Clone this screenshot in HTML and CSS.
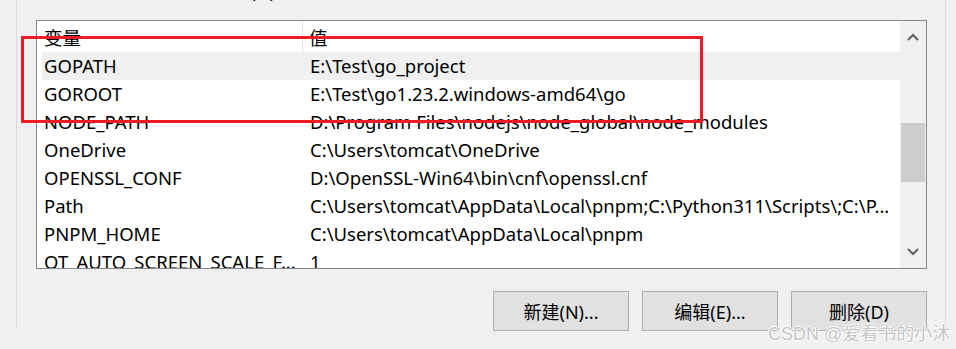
FILE: index.html
```html
<!DOCTYPE html>
<html lang="zh-CN">
<head>
    <meta charset="UTF-8">
    <title>环境变量</title>
    <link rel="stylesheet" href="styles.css">
</head>
<body>
    <div class="group">
        <div class="caption">tomcat 的用户变量(U)</div>

        <div class="list">
            <div class="list-body">
                <div class="row head">
                    <div class="cell name">变量</div>
                    <div class="cell value">值</div>
                </div>
                <div class="row sel">
                    <div class="cell name">GOPATH</div>
                    <div class="cell value">E:\Test\go_project</div>
                </div>
                <div class="row">
                    <div class="cell name">GOROOT</div>
                    <div class="cell value">E:\Test\go1.23.2.windows-amd64\go</div>
                </div>
                <div class="row">
                    <div class="cell name">NODE_PATH</div>
                    <div class="cell value">D:\Program Files\nodejs\node_global\node_modules</div>
                </div>
                <div class="row">
                    <div class="cell name">OneDrive</div>
                    <div class="cell value">C:\Users\tomcat\OneDrive</div>
                </div>
                <div class="row">
                    <div class="cell name">OPENSSL_CONF</div>
                    <div class="cell value">D:\OpenSSL-Win64\bin\cnf\openssl.cnf</div>
                </div>
                <div class="row">
                    <div class="cell name">Path</div>
                    <div class="cell value">C:\Users\tomcat\AppData\Local\pnpm;C:\Python311\Scripts\;C:\P...</div>
                </div>
                <div class="row">
                    <div class="cell name">PNPM_HOME</div>
                    <div class="cell value">C:\Users\tomcat\AppData\Local\pnpm</div>
                </div>
                <div class="row">
                    <div class="cell name">QT_AUTO_SCREEN_SCALE_F...</div>
                    <div class="cell value">1</div>
                </div>
            </div>
            <div class="scrollbar">
                <svg class="arrow" width="12" height="8" viewBox="0 0 12 8">
                    <path d="M1 7 L6 2 L11 7" fill="none" stroke="#606060" stroke-width="2"/>
                </svg>
                <div class="track">
                    <div class="thumb"></div>
                </div>
                <svg class="arrow" width="12" height="8" viewBox="0 0 12 8">
                    <path d="M1 1 L6 6 L11 1" fill="none" stroke="#606060" stroke-width="2"/>
                </svg>
            </div>
        </div>

        <div class="buttons">
            <button class="btn">新建(N)...</button>
            <button class="btn">编辑(E)...</button>
            <button class="btn">删除(D)</button>
        </div>
    </div>

    <!-- 截图上的红框标注 -->
    <div class="mark"></div>
    <div class="watermark">CSDN @爱看书的小沐</div>
</body>
</html>
```

FILE: styles.css
```css
body {
    margin: 0;
    width: 956px;
    height: 349px;
    overflow: hidden;
    background: #f0f0f0;
    font-family: "Noto Sans", "Noto Sans CJK SC", sans-serif;
    font-size: 18.5px;
    color: #000;
    position: relative;
}
.group {
    margin-left: 16px;
    width: 928px;
    height: 349px;
    border-left: 1px solid #dcdcdc;
    border-right: 1px solid #dcdcdc;
}
.caption {
    height: 20px;
    margin-left: 75px;
    margin-top: -20px;
    line-height: 22px;
    padding-bottom: 20px;
    box-sizing: content-box;
}
.list {
    margin-left: 19px;
    width: 889px;
    height: 247px;
    border: 1px solid #828790;
    background: #fff;
    display: flex;
}
.list-body {
    flex: 1;
    padding-left: 5px;
    overflow: hidden;
}
.row {
    display: flex;
    height: 28px;
    line-height: 28px;
    white-space: nowrap;
}
.row.head {
    height: 31px;
    line-height: 34px;
}
.row.sel {
    background: #f0f0f0;
}
.cell.name {
    width: 261px;
    padding-left: 2px;
    box-sizing: border-box;
    overflow: hidden;
}
.cell.value {
    padding-left: 7px;
}
.head .cell.name {
    border-right: 1px solid #e5e5e5;
}
.head .cell.value {
    padding-left: 6px;
}
.scrollbar {
    width: 26px;
    background: #f0f0f0;
    display: flex;
    flex-direction: column;
    align-items: center;
}
.arrow {
    margin: 12px 0;
    flex: none;
}
.track {
    flex: 1;
    width: 100%;
    padding: 70px 1px 0;
    box-sizing: border-box;
}
.thumb {
    height: 59px;
    background: #cdcdcd;
}
.buttons {
    display: flex;
    gap: 13px;
    margin-top: 22px;
    margin-left: 476px;
}
.btn {
    width: 136px;
    height: 40px;
    background: #e1e1e1;
    border: 1px solid #adadad;
    font-family: "Noto Sans", "Noto Sans CJK SC", sans-serif;
    font-size: 18px;
    color: #000;
    padding: 0;
}
.mark {
    position: absolute;
    left: 21px;
    top: 36px;
    width: 676px;
    height: 81px;
    border: 3px solid #ed1c24;
}
.watermark {
    position: absolute;
    left: 768px;
    top: 319px;
    font-family: "Liberation Sans", "Noto Sans CJK SC", sans-serif;
    font-size: 18px;
    color: #c4c4c4;
    text-shadow: 1px 0 0 #fff, -1px 0 0 #fff, 0 1px 0 #fff, 0 -1px 0 #fff;
    white-space: nowrap;
}
```
